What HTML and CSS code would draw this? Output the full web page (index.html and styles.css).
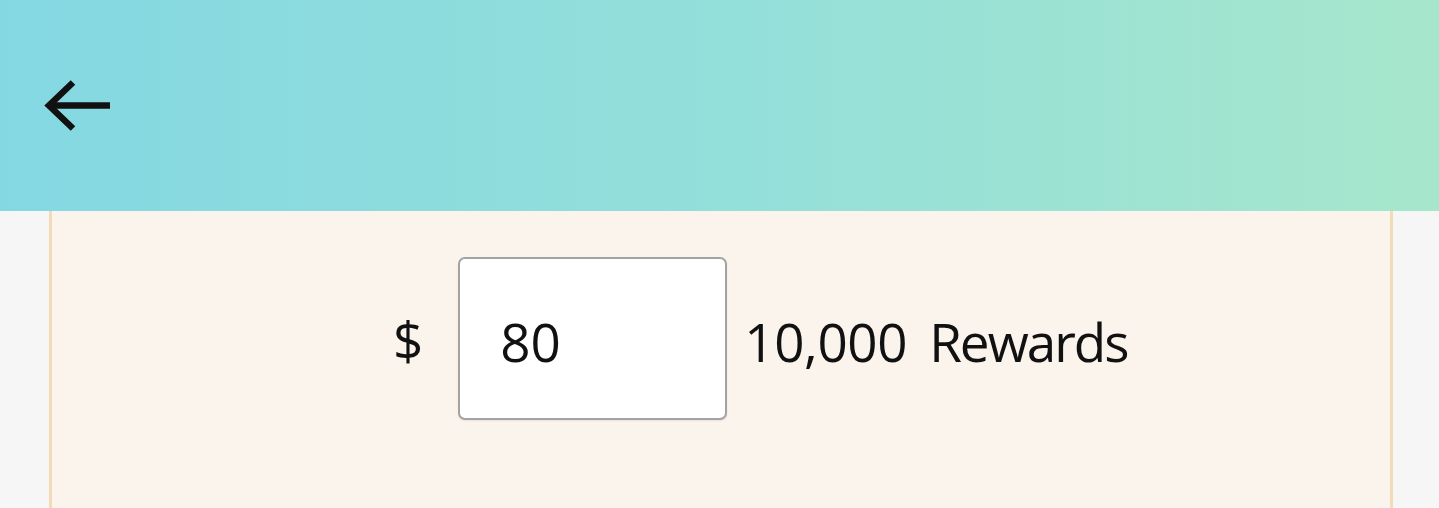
FILE: index.html
```html
<!DOCTYPE html>
<html>
<head>
<meta charset="utf-8">
<link rel="stylesheet" href="styles.css">
</head>
<body>
<header class="topbar">
  <button class="back" aria-label="Back">
    <svg width="68" height="56" viewBox="0 0 68 56" fill="none" stroke="#111" stroke-width="6.5">
      <path d="M67 27.5H6"/>
      <path d="M30 4.5L6 27.5L30 50.5"/>
    </svg>
  </button>
</header>
<main class="page">
  <section class="card">
    <div class="row">
      <span class="currency">$</span>
      <input class="amount" type="text" value="80">
      <span class="points">10,000</span>
      <span class="label">Rewards</span>
    </div>
  </section>
</main>
</body>
</html>
```

FILE: styles.css
```css
html, body {
  margin: 0;
  padding: 0;
}
body {
  background: #f6f6f6;
  font-family: "Open Sans", "Noto Sans", sans-serif;
  color: #111;
  height: 508px;
  overflow: hidden;
}
.topbar {
  height: 211px;
  background: linear-gradient(90deg, #84d8e2 0%, #93dfda 50%, #a6e6cc 100%);
  display: flex;
  align-items: center;
  padding-left: 43px;
  box-sizing: border-box;
}
.back {
  background: none;
  border: 0;
  padding: 0;
  display: flex;
  margin-top: 1px;
}
.page {
  padding: 0 46px 0 49px;
}
.card {
  background: #fbf4ec;
  border-left: 3px solid #f3dab9;
  border-right: 3px solid #f3dab9;
  height: 297px;
  padding: 46px 0 0 341px;
  box-sizing: border-box;
}
.row {
  display: flex;
  align-items: center;
  font-size: 53px;
}
.currency {
  margin-right: 36px;
  margin-top: 2px;
  letter-spacing: -1px;
}
.amount {
  width: 269px;
  height: 163px;
  box-sizing: border-box;
  border: 2.5px solid #a3a3a3;
  border-radius: 7px;
  background: #fff;
  font: inherit;
  color: #111;
  padding: 6px 0 0 40px;
  outline: none;
  box-shadow: 0 1px 2px rgba(0,0,0,0.08);
}
.points {
  margin-left: 17px;
  margin-right: 22px;
  margin-top: 6px;
  letter-spacing: -0.4px;
}
.label {
  margin-top: 6px;
  letter-spacing: -2px;
}
```
